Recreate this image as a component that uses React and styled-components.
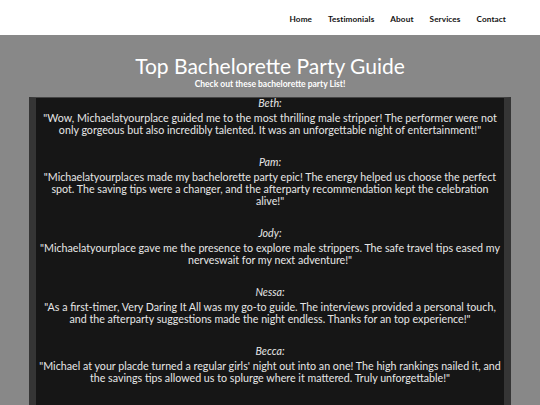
import React from 'react';
import styled, { createGlobalStyle } from 'styled-components';

const reviews = [
  {
    name: 'Beth:',
    text: '"Wow, Michaelatyourplace guided me to the most thrilling male stripper! The performer were not only gorgeous but also incredibly talented. It was an unforgettable night of entertainment!"',
  },
  {
    name: 'Pam:',
    text: '"Michaelatyourplaces made my bachelorette party epic! The energy helped us choose the perfect spot. The saving tips were a changer, and the afterparty recommendation kept the celebration alive!"',
  },
  {
    name: 'Jody:',
    text: '"Michaelatyourplace gave me the presence to explore male strippers. The safe travel tips eased my nerveswait for my next adventure!"',
  },
  {
    name: 'Nessa:',
    text: '"As a first-timer, Very Daring It All was my go-to guide. The interviews provided a personal touch, and the afterparty suggestions made the night endless. Thanks for an top experience!"',
  },
  {
    name: 'Becca:',
    text: '"Michael at your placde turned a regular girls\' night out into an one! The high rankings nailed it, and the savings tips allowed us to splurge where it mattered. Truly unforgettable!"',
  },
];

const navLinks = ['Home', 'Testimonials', 'About', 'Services', 'Contact'];

const App = () => {
  return (
    <>
      <GlobalStyle />
      <Header>
        <Nav>
          {navLinks.map((link) => (
            <NavLink key={link} href="#">{link}</NavLink>
          ))}
        </Nav>
      </Header>
      <Main>
        <Title>Top Bachelorette Party Guide</Title>
        <Subtitle>Check out these bachelorette party List!</Subtitle>
        <ReviewBox>
          {reviews.map((r) => (
            <Review key={r.name}>
              <Name>{r.name}</Name>
              <Quote>{r.text}</Quote>
            </Review>
          ))}
        </ReviewBox>
      </Main>
    </>
  );
};

const GlobalStyle = createGlobalStyle`
  html, body {
    margin: 0;
    padding: 0;
    background: #888888;
    font-family: Lato, "Open Sans", sans-serif;
    overflow: hidden;
  }
`;

const Header = styled.header`
  height: 35px;
  background: #ffffff;
  display: flex;
  align-items: center;
  justify-content: flex-end;
  padding-right: 34px;
`;

const Nav = styled.nav`
  display: flex;
  gap: 16px;
`;

const NavLink = styled.a`
  font-size: 8.2px;
  font-weight: 700;
  letter-spacing: 0.1px;
  color: #111;
  text-decoration: none;
  margin-top: 3px;
`;

const Main = styled.main`
  display: flex;
  flex-direction: column;
  align-items: center;
  padding-top: 19px;
`;

const Title = styled.h1`
  margin: 0;
  font-size: 21px;
  font-weight: 400;
  line-height: 24px;
  color: #ffffff;
`;

const Subtitle = styled.p`
  margin: 1px 0 0;
  font-size: 8.5px;
  font-weight: 700;
  line-height: 11px;
  color: #ffffff;
`;

const ReviewBox = styled.section`
  box-sizing: border-box;
  width: 482px;
  margin-top: 7px;
  background: #161616;
  border-top: 1px solid #444;
  border-left: 7px solid #353535;
  border-right: 7px solid #353535;
  padding: 0 1px;
  text-align: center;
  color: #e6e6e6;
`;

const Review = styled.div`
  margin-bottom: 21px;
`;

const Name = styled.p`
  margin: 0 0 5px;
  font-size: 10.7px;
  font-style: italic;
  line-height: 9px;
`;

const Quote = styled.p`
  margin: 0;
  font-size: 10.7px;
  line-height: 12px;
`;

export default App;
